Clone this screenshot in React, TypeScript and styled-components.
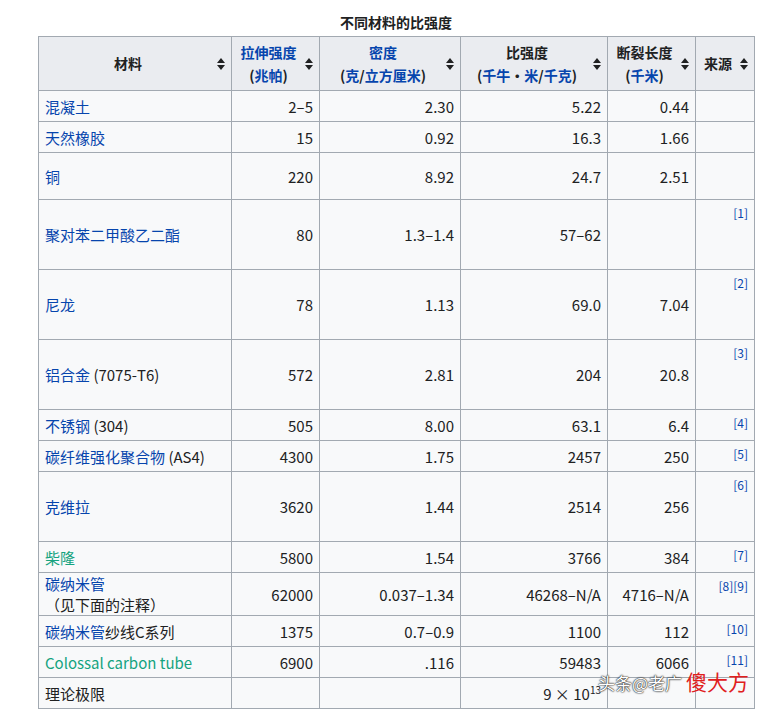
import React from "react";
import styled, { createGlobalStyle } from "styled-components";

const Global = createGlobalStyle`
  body { margin: 0; background: #fff; font-family: "Noto Sans CJK SC", "Noto Sans", sans-serif; color: #202122; }
`;

const Page = styled.div`
  padding: 8px 0 0 38px;
  position: relative;
`;

const Caption = styled.div`
  width: 716px;
  text-align: center;
  font-weight: 700;
  font-size: 14px;
  line-height: 28px;
`;

const Table = styled.table`
  border-collapse: collapse;
  width: 716px;
  background: #f8f9fa;
  font-size: 15px;
  table-layout: fixed;
`;

const Th = styled.th`
  background: #eaecf0;
  border: 1px solid #a2a9b1;
  height: 53px;
  padding: 0 18px 0 4px;
  position: relative;
  font-weight: 700;
  font-size: 14px;
  line-height: 23px;
`;

const Td = styled.td<{ $h: number; $num?: boolean }>`
  border: 1px solid #a2a9b1;
  height: ${(p) => p.$h - 1}px;
  padding: 0 6px;
  text-align: ${(p) => (p.$num ? "right" : "left")};
  vertical-align: middle;
`;

const RefCell = styled.td`
  border: 1px solid #a2a9b1;
  vertical-align: top;
  text-align: right;
  padding: 4px 6px 0 0;
  font-size: 12px;
  color: #0645ad;
`;

const Link = styled.span<{ $green?: boolean }>`
  color: ${(p) => (p.$green ? "#14a37f" : "#0645ad")};
`;

const Sort = styled.svg`
  position: absolute;
  right: 6px;
  top: 50%;
  transform: translateY(-50%);
`;

const Watermark = styled.div`
  position: absolute;
  left: 598px;
  top: 668px;
  font-size: 17px;
  line-height: 26px;
  color: #fff;
  text-shadow: 0 0 2px #000, 0 0 1px #000;
  white-space: nowrap;
  & b { color: #e0201d; text-shadow: none; font-weight: 400; font-size: 21px; }
`;

const Arrow = () => (
  <Sort width="8" height="12" viewBox="0 0 8 12">
    <path d="M4 0L8 5H0z M4 12L0 7H8z" fill="#202122" />
  </Sort>
);

type Row = { name: React.ReactNode; v: string[]; ref?: string; h: number };

const rows: Row[] = [
  { name: <Link>混凝土</Link>, v: ["2–5", "2.30", "5.22", "0.44"], h: 31 },
  { name: <Link>天然橡胶</Link>, v: ["15", "0.92", "16.3", "1.66"], h: 31 },
  { name: <Link>铜</Link>, v: ["220", "8.92", "24.7", "2.51"], h: 47 },
  { name: <Link>聚对苯二甲酸乙二酯</Link>, v: ["80", "1.3–1.4", "57–62", ""], ref: "[1]", h: 70 },
  { name: <Link>尼龙</Link>, v: ["78", "1.13", "69.0", "7.04"], ref: "[2]", h: 70 },
  { name: <><Link>铝合金</Link> (7075-T6)</>, v: ["572", "2.81", "204", "20.8"], ref: "[3]", h: 70 },
  { name: <><Link>不锈钢</Link> (304)</>, v: ["505", "8.00", "63.1", "6.4"], ref: "[4]", h: 31 },
  { name: <><Link>碳纤维强化聚合物</Link> (AS4)</>, v: ["4300", "1.75", "2457", "250"], ref: "[5]", h: 31 },
  { name: <Link>克维拉</Link>, v: ["3620", "1.44", "2514", "256"], ref: "[6]", h: 70 },
  { name: <Link $green>柴隆</Link>, v: ["5800", "1.54", "3766", "384"], ref: "[7]", h: 31 },
  { name: <><Link>碳纳米管</Link>（见下面的注释）</>, v: ["62000", "0.037–1.34", "46268–N/A", "4716–N/A"], ref: "[8][9]", h: 31 },
  { name: <><Link>碳纳米管</Link>纱线C系列</>, v: ["1375", "0.7–0.9", "1100", "112"], ref: "[10]", h: 31 },
  { name: <Link $green>Colossal carbon tube</Link>, v: ["6900", ".116", "59483", "6066"], ref: "[11]", h: 31 },
];

export default function App() {
  return (
    <>
      <Global />
      <Page>
        <Caption>不同材料的比强度</Caption>
        <Table>
          <colgroup>
            <col style={{ width: 193 }} />
            <col style={{ width: 88 }} />
            <col style={{ width: 141 }} />
            <col style={{ width: 147 }} />
            <col style={{ width: 88 }} />
            <col style={{ width: 59 }} />
          </colgroup>
          <thead>
            <tr>
              <Th>材料<Arrow /></Th>
              <Th><Link>拉伸强度</Link><br />(<Link>兆帕</Link>)<Arrow /></Th>
              <Th><Link>密度</Link><br />(<Link>克</Link>/<Link>立方厘米</Link>)<Arrow /></Th>
              <Th>比强度<br />(<Link>千牛</Link>•<Link>米</Link>/<Link>千克</Link>)<Arrow /></Th>
              <Th>断裂长度<br />(<Link>千米</Link>)<Arrow /></Th>
              <Th>来源<Arrow /></Th>
            </tr>
          </thead>
          <tbody>
            {rows.map((r, i) => (
              <tr key={i}>
                <Td $h={r.h}>{r.name}</Td>
                {r.v.map((x, j) => (
                  <Td key={j} $h={r.h} $num>{x}</Td>
                ))}
                <RefCell>{r.ref}</RefCell>
              </tr>
            ))}
            <tr>
              <Td $h={31}>理论极限</Td>
              <Td $h={31} $num />
              <Td $h={31} $num />
              <Td $h={31} $num>9 × 10<sup style={{ fontSize: 10 }}>13</sup></Td>
              <Td $h={31} $num />
              <RefCell />
            </tr>
          </tbody>
        </Table>
        <Watermark>头条@老广 <b>傻大方</b></Watermark>
      </Page>
    </>
  );
}
